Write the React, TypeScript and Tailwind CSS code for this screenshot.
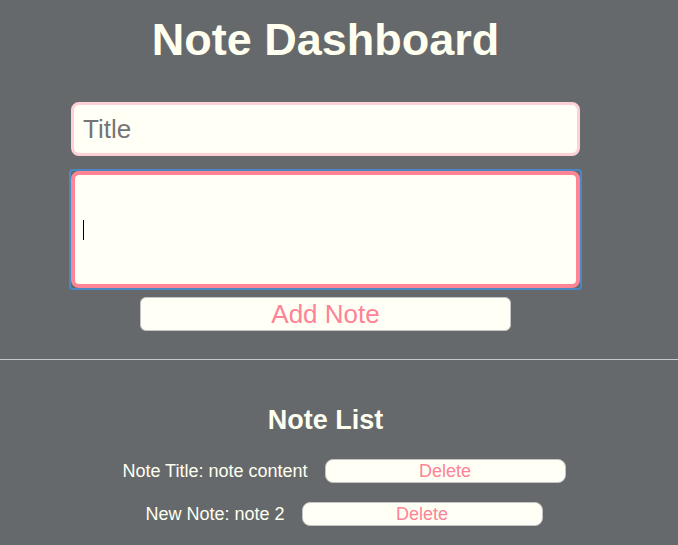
import { useState } from "react";

interface Note {
  id: number;
  title: string;
  content: string;
}

export default function App() {
  const [notes] = useState<Note[]>([
    { id: 1, title: "Note Title", content: "note content" },
    { id: 2, title: "New Note", content: "note 2" },
  ]);

  return (
    <div className="min-h-screen bg-[#66696c] font-['Liberation_Sans',Arial,sans-serif] text-[#fffff0]">
      {/* Form */}
      <div className="w-[651px] flex flex-col items-center pt-[14px]">
        <h1 className="text-[45px] leading-[52px] font-bold">Note Dashboard</h1>
        <input
          placeholder="Title"
          className="mt-[36px] w-[509px] h-[54px] rounded-lg border-[3px] border-[#ffd0d8] bg-[#fffff5] px-[9px] text-[26px] text-gray-800 placeholder:text-[#757575] outline-none"
        />
        <div className="relative mt-[15px] w-[509px] h-[117px] rounded-[2px] outline-2 outline-offset-0 outline-[#4a88c4]">
          <input className="w-full h-full rounded-lg border-[4px] border-[#ff8594] bg-[#fffff5] px-[8px] text-[26px] text-gray-800 outline-none" />
          <span className="absolute left-[12px] top-[49px] w-px h-[20px] bg-black" />
        </div>
        <button className="mt-[9px] w-[371px] h-[34px] rounded-md border border-[#c4c4c4] bg-[#fffff5] text-[26px] leading-none text-[#ff8397]">
          Add Note
        </button>
      </div>

      <hr className="mt-[28px] border-0 border-t border-[#c9c9c9]" />

      {/* List */}
      <div className="w-[651px] flex flex-col items-center pt-[45px]">
        <h2 className="text-[27px] leading-[30px] font-bold">Note List</h2>
        <ul className="mt-[24px] pl-[37px] flex flex-col items-center gap-[19px]">
          {notes.map(n => (
            <li key={n.id} className="flex items-center gap-[17px] h-[24px]">
              <span className="text-[18px] leading-[24px]">{n.title}: {n.content}</span>
              <button className="w-[241px] h-[24px] rounded-lg border border-[#c4c4c4] bg-[#fffff5] text-[18px] leading-none text-[#ff8397]">
                Delete
              </button>
            </li>
          ))}
        </ul>
      </div>
    </div>
  );
}
